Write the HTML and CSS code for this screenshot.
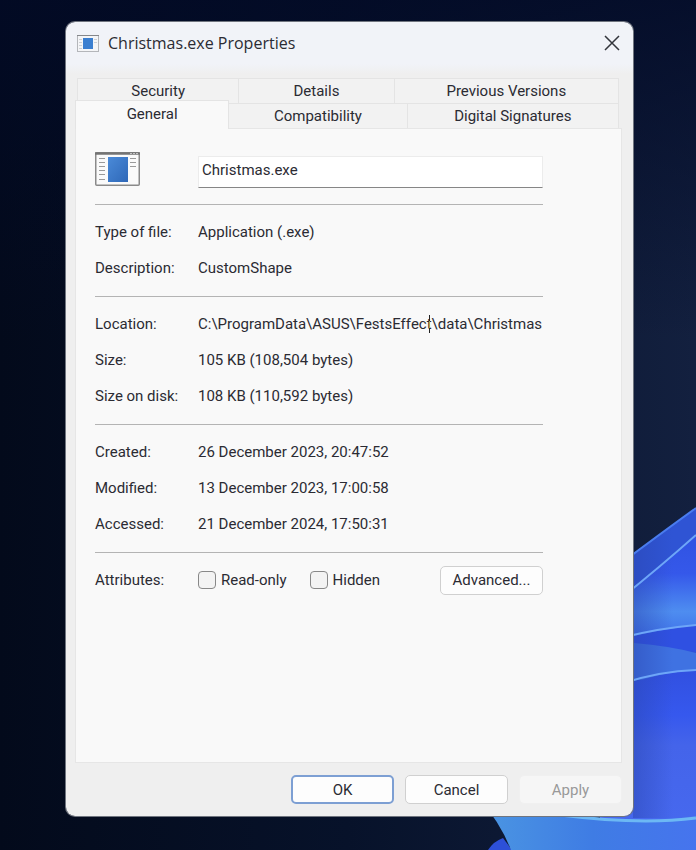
FILE: index.html
```
<!DOCTYPE html>
<html lang="en">
<head>
    <meta charset="utf-8">
    <title>Christmas.exe Properties</title>
    <link rel="stylesheet" href="styles.css">
</head>
<body>
    <svg class="wallpaper" viewBox="0 0 696 850" preserveAspectRatio="xMaxYMax slice" aria-hidden="true">
        <defs>
            <linearGradient id="sky" x1="0" y1="0" x2="1" y2="0">
                <stop offset="0" stop-color="#030a1b"/>
                <stop offset="0.5" stop-color="#07122a"/>
                <stop offset="1" stop-color="#13203f"/>
            </linearGradient>
            <linearGradient id="night" x1="0" y1="0" x2="0" y2="1">
                <stop offset="0" stop-color="#020a26" stop-opacity="0.8"/>
                <stop offset="0.4" stop-color="#020a26" stop-opacity="0"/>
            </linearGradient>
            <linearGradient id="petal" gradientUnits="userSpaceOnUse" x1="0" y1="545" x2="0" y2="640">
                <stop offset="0" stop-color="#3154e4"/>
                <stop offset="0.3" stop-color="#3558ea"/>
                <stop offset="0.7" stop-color="#4e8df0"/>
                <stop offset="1" stop-color="#3d6ee8"/>
            </linearGradient>
            <linearGradient id="body" gradientUnits="userSpaceOnUse" x1="0" y1="670" x2="0" y2="820">
                <stop offset="0" stop-color="#3150e0"/>
                <stop offset="0.3" stop-color="#3658ee"/>
                <stop offset="0.5" stop-color="#4464ea"/>
                <stop offset="1" stop-color="#4668ee"/>
            </linearGradient>
            <linearGradient id="base" gradientUnits="userSpaceOnUse" x1="490" y1="0" x2="696" y2="0">
                <stop offset="0" stop-color="#4a94e2"/>
                <stop offset="0.5" stop-color="#3f7ce4"/>
                <stop offset="1" stop-color="#4674ee"/>
            </linearGradient>
            <linearGradient id="shade" x1="0" y1="0" x2="1" y2="0">
                <stop offset="0" stop-color="#2a46b0" stop-opacity="0.5"/>
                <stop offset="1" stop-color="#2a46b0" stop-opacity="0"/>
            </linearGradient>
        </defs>
        <rect width="696" height="850" fill="url(#sky)"/>
        <rect width="696" height="850" fill="url(#night)"/>
        <path d="M600 580 L634 553 Q664 531 696 508 V850 H600Z" fill="#2f54d4"/>
        <path d="M600 616 L634 587 Q664 564 696 535 V650 L634 640 H600Z" fill="url(#petal)"/>
        <path d="M600 640 L634 636 Q664 629 696 625 V652 L634 645Z" fill="#2f50e2"/>
        <path d="M600 640 L634 643 Q670 646 696 653 V680 H600Z" fill="#3f72e2"/>
        <path d="M600 686 L634 682 Q670 671 696 670 V830 H600Z" fill="url(#body)"/>
        <path d="M633 554 L673 525 V818 H633Z" fill="url(#shade)"/>
        <path d="M488 850 Q494 841 503 838 L512 850Z" fill="#2d50d8"/>
        <path d="M480 800 Q500 822 511 850 H696 V816 Q655 822 600 818Z" fill="url(#base)"/>
        <g fill="none" stroke="#6ea6f8" stroke-width="2">
            <path d="M620 564 Q660 534 696 508" stroke="#4a7cee"/>
            <path d="M620 599 Q660 567 696 535"/>
            <path d="M620 638 Q660 628 696 625"/>
            <path d="M620 684 Q660 671 696 670"/>
            <path d="M560 815 Q640 825 696 818" stroke="#6cb8f4" stroke-width="3"/>
        </g>
    </svg>

    <form class="dialog">
        <header class="titlebar">
            <svg class="app-icon-small" viewBox="0 0 22 17" aria-hidden="true">
                <rect x="0.5" y="0.5" width="21" height="16" fill="#f4f5f7" stroke="#b4b6ba"/>
                <path d="M0 0.5H22" stroke="#85878b"/>
                <path d="M2 4.5h3M2 7.5h3M2 10.5h3M2 13.5h3M17 4.5h3M17 7.5h3" stroke="#cdd0d5"/>
                <rect x="6" y="3" width="10" height="11" fill="#3b7fd0"/>
            </svg>
            <h1 class="title">Christmas.exe Properties</h1>
            <button type="button" class="close" aria-label="Close">
                <svg viewBox="0 0 16 16" aria-hidden="true"><path d="M1 1L15 15M15 1L1 15"/></svg>
            </button>
        </header>

        <nav class="tabs">
            <div class="tab-row tab-row-back">
                <button type="button" class="tab">Security</button>
                <button type="button" class="tab">Details</button>
                <button type="button" class="tab">Previous Versions</button>
            </div>
            <div class="tab-row tab-row-front">
                <button type="button" class="tab tab-active">General</button>
                <button type="button" class="tab">Compatibility</button>
                <button type="button" class="tab">Digital Signatures</button>
            </div>
        </nav>

        <main class="panel">
            <div class="file-head">
                <svg class="app-icon" viewBox="0 0 45 34" aria-hidden="true">
                    <defs>
                        <linearGradient id="screen" x1="0" y1="0" x2="1" y2="1">
                            <stop offset="0" stop-color="#4a8ad8"/>
                            <stop offset="1" stop-color="#2f68b8"/>
                        </linearGradient>
                    </defs>
                    <rect x="0.75" y="0.75" width="43.5" height="32.5" rx="1" fill="#fafafa" stroke="#8a8a8a" stroke-width="1.5"/>
                    <path d="M0 1.5H45" stroke="#747474" stroke-width="2.5"/>
                    <path d="M35 1.5h2M38 1.5h2M41 1.5h2" stroke="#c4c4c4"/>
                    <path d="M4 6.5h6M4 10.5h6M4 14.5h6M4 18.5h6M4 22.5h6M4 27.5h6M35 6.5h6M35 10.5h6M35 14.5h6" stroke="#9a9a9a"/>
                    <rect x="13" y="5" width="20" height="25" fill="url(#screen)"/>
                </svg>
                <input class="file-name" type="text" value="Christmas.exe" aria-label="File name">
            </div>

            <dl class="group">
                <dt>Type of file:</dt><dd>Application (.exe)</dd>
                <dt>Description:</dt><dd>CustomShape</dd>
            </dl>
            <dl class="group">
                <dt>Location:</dt>
                <dd>C:\ProgramData\ASUS\FestsEffec<span class="hovered">t<svg class="ibeam" viewBox="0 0 5 18" aria-hidden="true"><path d="M2.5 0V6M2.5 13V18" stroke="#222"/><path d="M2.5 6V13" stroke="#a5a552"/></svg></span>\data\Christmas</dd>
                <dt>Size:</dt><dd>105 KB (108,504 bytes)</dd>
                <dt>Size on disk:</dt><dd>108 KB (110,592 bytes)</dd>
            </dl>
            <dl class="group">
                <dt>Created:</dt><dd>26 December 2023, 20:47:52</dd>
                <dt>Modified:</dt><dd>13 December 2023, 17:00:58</dd>
                <dt>Accessed:</dt><dd>21 December 2024, 17:50:31</dd>
            </dl>
            <div class="group attributes">
                <span>Attributes:</span>
                <div class="attribute-list">
                    <label class="check"><input type="checkbox">Read-only</label>
                    <label class="check"><input type="checkbox">Hidden</label>
                    <button type="button" class="btn">Advanced...</button>
                </div>
            </div>
        </main>

        <footer class="actions">
            <button type="submit" class="btn btn-default">OK</button>
            <button type="button" class="btn">Cancel</button>
            <button type="button" class="btn" disabled>Apply</button>
        </footer>
    </form>
</body>
</html>
```

FILE: styles.css
```
* {
    box-sizing: border-box;
}

body {
    margin: 0;
    min-height: 100vh;
    padding: 22px 63px 34px 66px;
    display: flex;
    background: #06102a;
    color: #2b2b33;
    font: 15px/20px Roboto, "Liberation Sans", sans-serif;
}

button,
input {
    font: inherit;
    color: inherit;
}

.wallpaper {
    position: absolute;
    inset: 0;
    width: 100%;
    height: 100%;
}

.dialog {
    position: relative;
    flex: 1;
    display: flex;
    flex-direction: column;
    padding: 0 11px 12px 9px;
    border-radius: 9px;
    background: linear-gradient(#f1f3f8 42px, #efefef 52px);
    box-shadow: 0 0 0 1px #70757f;
}

/* title bar */
.titlebar {
    display: flex;
    align-items: center;
    height: 42px;
    margin-bottom: 14px;
    padding: 0 2px;
}

.app-icon-small {
    width: 22px;
    height: 17px;
}

.title {
    flex: 1;
    margin: 0 0 0 9px;
    font: 16px/22px "Open Sans", "Noto Sans", sans-serif;
}

.close {
    padding: 0;
    border: 0;
    background: none;
}

.close svg {
    display: block;
    width: 16px;
    height: 16px;
    fill: none;
    stroke: #33353b;
    stroke-width: 1.5;
}

/* tabs */
.tab-row {
    display: grid;
    height: 25px;
    margin-right: 3px;
}

.tab-row-back {
    grid-template-columns: 162fr 155fr 224fr;
    margin-left: 2px;
}

.tab-row-front {
    grid-template-columns: 154fr 178fr 211fr;
}

.tab {
    padding: 0;
    border: solid #e4e4e4;
    border-width: 1px 1px 0 0;
    background: #f2f2f2;
}

.tab-row-back .tab:first-child {
    border-left-width: 1px;
}

.tab-active {
    position: relative;
    margin: -3px 0 -1px;
    padding-bottom: 3px;
    border-left-width: 1px;
    background: #f9f9f9;
}

/* page of the selected tab */
.panel {
    flex: 1;
    padding: 23px 78px 20px 19px;
    border: 1px solid #e6e6e6;
    background: #f9f9f9;
}

.file-head,
.group {
    display: grid;
    grid-template-columns: 103px 1fr;
}

.file-head {
    margin-bottom: 16px;
}

.app-icon {
    width: 45px;
    height: 34px;
}

.file-name {
    width: 100%;
    height: 32px;
    margin-top: 4px;
    padding: 0 3px 4px;
    border: 1px solid #ececec;
    border-bottom-color: #868686;
    background: #fff;
}

.group {
    margin: 0;
    padding: 9px 0 10px;
    border-top: 1px solid #b4b4b4;
    line-height: 36px;
}

.group dd {
    margin: 0;
    white-space: nowrap;
}

.hovered {
    position: relative;
}

.ibeam {
    position: absolute;
    left: 0;
    top: 0;
    width: 5px;
    height: 18px;
}

.attribute-list {
    display: flex;
    align-items: center;
    gap: 23px;
}

.attribute-list .btn {
    margin-left: auto;
}

.check {
    display: flex;
    align-items: center;
    gap: 5px;
}

.check input {
    appearance: none;
    width: 18px;
    height: 18px;
    margin: 0;
    border: 1px solid #888;
    border-radius: 4px;
    background: #f3f3f3;
}

/* buttons */
.btn {
    width: 103px;
    height: 29px;
    padding: 0;
    border: 1px solid #d0d0d0;
    border-radius: 5px;
    background: #fdfdfd;
    line-height: 20px;
}

.btn-default {
    border: 2px solid #7d9fd3;
}

.btn:disabled {
    border-color: #f0f0f0;
    background: #f6f6f6;
    color: #999;
}

.actions {
    display: flex;
    justify-content: flex-end;
    gap: 11px;
    padding-top: 12px;
}
```
